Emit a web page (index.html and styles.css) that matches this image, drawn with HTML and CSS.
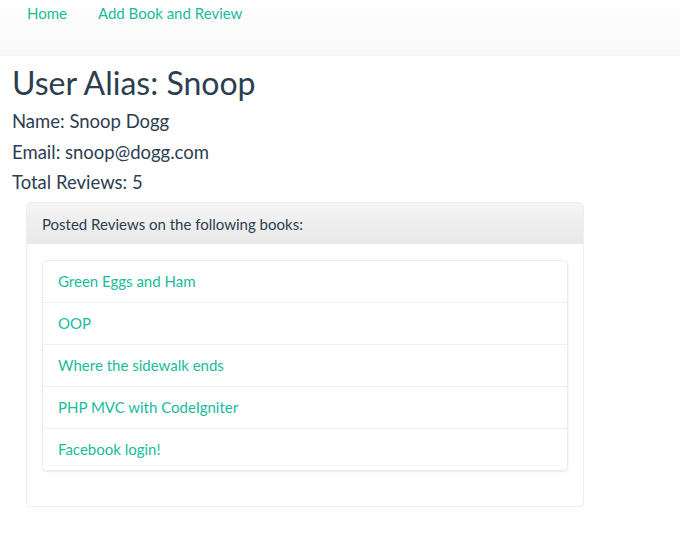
FILE: index.html
```html
<!DOCTYPE html>
<html>
<head>
<meta charset="utf-8">
<link rel="stylesheet" href="styles.css">
</head>
<body>
<nav class="navbar">
  <a class="nav-link" href="#">Home</a>
  <a class="nav-link" href="#">Add Book and Review</a>
</nav>
<main class="content">
  <h1 class="alias">User Alias: Snoop</h1>
  <p class="info">Name: Snoop Dogg</p>
  <p class="info">Email: snoop@dogg.com</p>
  <p class="info">Total Reviews: 5</p>
  <section class="panel">
    <div class="panel-heading">Posted Reviews on the following books:</div>
    <div class="panel-body">
      <ul class="list-group">
        <li class="list-item"><a href="#">Green Eggs and Ham</a></li>
        <li class="list-item"><a href="#">OOP</a></li>
        <li class="list-item"><a href="#">Where the sidewalk ends</a></li>
        <li class="list-item"><a href="#">PHP MVC with CodeIgniter</a></li>
        <li class="list-item"><a href="#">Facebook login!</a></li>
      </ul>
    </div>
  </section>
</main>
</body>
</html>
```
FILE: styles.css
```css
* { box-sizing: border-box; }
body {
  margin: 0;
  font-family: Lato, "Open Sans", sans-serif;
  color: #2c3e50;
  background: #fff;
}
a { color: #18bc9c; text-decoration: none; }
.navbar {
  height: 56px;
  background: linear-gradient(to bottom, #ffffff 0%, #f8f8f8 100%);
  border-bottom: 1px solid #f2f2f2;
  display: flex;
  align-items: flex-start;
  padding: 3px 0 0 27px;
  gap: 31px;
}
.nav-link { font-size: 15px; line-height: 20px; }
.content { padding: 0 12px; }
.alias {
  margin: 7px 0 3px;
  font-size: 32px;
  font-weight: 400;
  line-height: 40px;
}
.info {
  margin: 0;
  font-size: 18.5px;
  line-height: 30.5px;
}
.panel {
  margin: 4px 0 0 14px;
  width: 558px;
  border: 1px solid #eeeeee;
  border-radius: 4px;
  box-shadow: 0 1px 2px rgba(0,0,0,0.04);
}
.panel-heading {
  height: 41px;
  padding: 11px 15px 0;
  font-size: 15px;
  line-height: 20px;
  background: linear-gradient(to bottom, #f5f5f5 0%, #e8e8e8 100%);
  border-radius: 3px 3px 0 0;
}
.panel-body { padding: 16px 15px 35px; }
.list-group {
  list-style: none;
  margin: 0;
  padding: 0;
  border: 1px solid #ececec;
  border-radius: 4px;
  box-shadow: 0 1px 2px rgba(0,0,0,0.08);
}
.list-item {
  height: 42px;
  padding: 10px 15px 0;
  font-size: 15px;
  line-height: 20px;
  border-top: 1px solid #ecf0f1;
}
.list-item:first-child { border-top: none; height: 41px; }
```
